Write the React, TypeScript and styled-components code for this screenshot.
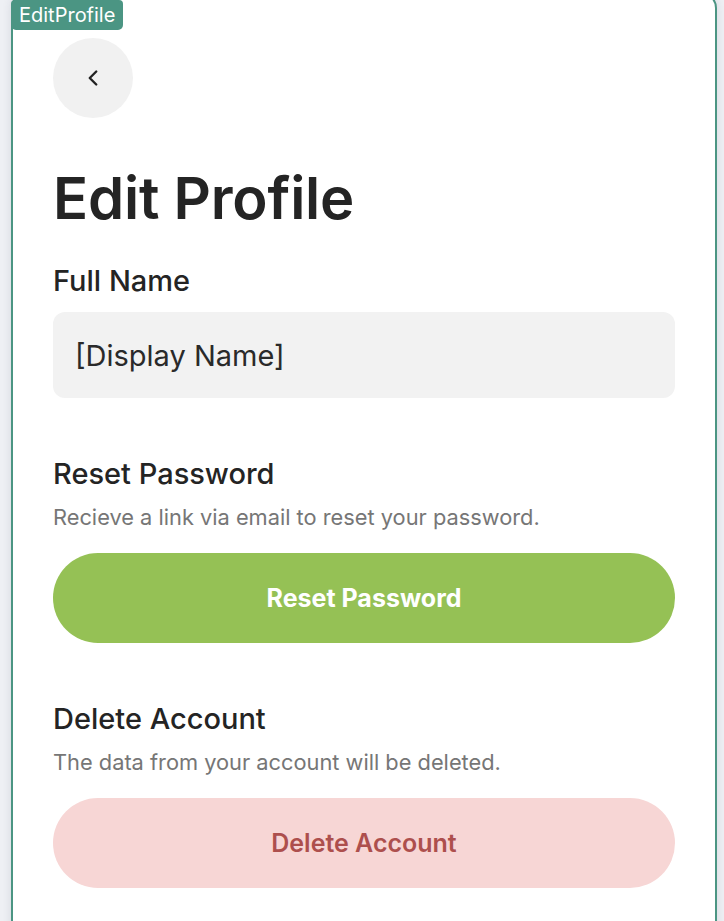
import React from 'react';
import styled, { createGlobalStyle } from 'styled-components';
import { ChevronLeft } from 'lucide-react';

const GlobalStyle = createGlobalStyle`
  html, body {
    margin: 0;
    padding: 0;
    background: #eef0f4;
    font-family: 'Inter', 'Noto Sans', sans-serif;
    overflow: hidden;
  }
`;

const Frame = styled.div`
  position: relative;
  margin: -8px 0 0 11px;
  width: 706px;
  min-height: 960px;
  box-sizing: border-box;
  border: 2px solid #4b9583;
  border-radius: 16px;
  background: #ffffff;
  box-shadow: 0 0 10px rgba(40, 50, 70, 0.12);
  padding: 44px 40px 0 40px;
`;

const Tag = styled.div`
  position: absolute;
  top: 6px;
  left: -2px;
  height: 30px;
  padding: 0 8px;
  display: flex;
  align-items: center;
  background: #4b9583;
  color: #ffffff;
  font-size: 20px;
  border-radius: 4px 4px 5px 5px;
`;

const BackButton = styled.button`
  width: 80px;
  height: 80px;
  border: none;
  border-radius: 50%;
  background: #f1f1f1;
  color: #222222;
  display: flex;
  align-items: center;
  justify-content: center;
  padding: 0;
  cursor: pointer;
`;

const Title = styled.h1`
  margin: 45px 0 0 0;
  font-size: 58px;
  line-height: 70px;
  font-weight: 600;
  color: #242424;
  letter-spacing: -0.2px;
`;

const Section = styled.section<{ $gap: number }>`
  margin-top: ${(p) => p.$gap}px;
  display: flex;
  flex-direction: column;
`;

const Label = styled.h2`
  margin: 0;
  font-size: 29px;
  line-height: 34px;
  font-weight: 500;
  color: #242424;
`;

const Hint = styled.p`
  margin: 12px 0 0 0;
  font-size: 21.8px;
  line-height: 28px;
  color: #767676;
`;

const Field = styled.div`
  margin-top: 14px;
  height: 86px;
  border-radius: 12px;
  background: #f2f2f2;
  display: flex;
  align-items: center;
  padding: 0 22px;
  font-size: 29px;
  color: #2a2a2a;
`;

const PillButton = styled.button<{ $bg: string; $fg: string; $weight: number }>`
  margin-top: 22px;
  height: 90px;
  width: 100%;
  border: none;
  border-radius: 45px;
  background: ${(p) => p.$bg};
  color: ${(p) => p.$fg};
  font-family: inherit;
  font-size: 25px;
  font-weight: ${(p) => p.$weight};
  cursor: pointer;
`;

export default function App() {
  return (
    <>
      <GlobalStyle />
      <Frame>
        <Tag>EditProfile</Tag>
        <BackButton aria-label="Back">
          <ChevronLeft size={26} strokeWidth={2.2} />
        </BackButton>
        <Title>Edit Profile</Title>

        <Section $gap={31}>
          <Label>Full Name</Label>
          <Field>[Display Name]</Field>
        </Section>

        <Section $gap={59}>
          <Label>Reset Password</Label>
          <Hint>Recieve a link via email to reset your password.</Hint>
          <PillButton $bg="#95c155" $fg="#ffffff" $weight={700}>
            Reset Password
          </PillButton>
        </Section>

        <Section $gap={59}>
          <Label>Delete Account</Label>
          <Hint>The data from your account will be deleted.</Hint>
          <PillButton $bg="#f7d6d5" $fg="#ad4f4d" $weight={600}>
            Delete Account
          </PillButton>
        </Section>
      </Frame>
    </>
  );
}
